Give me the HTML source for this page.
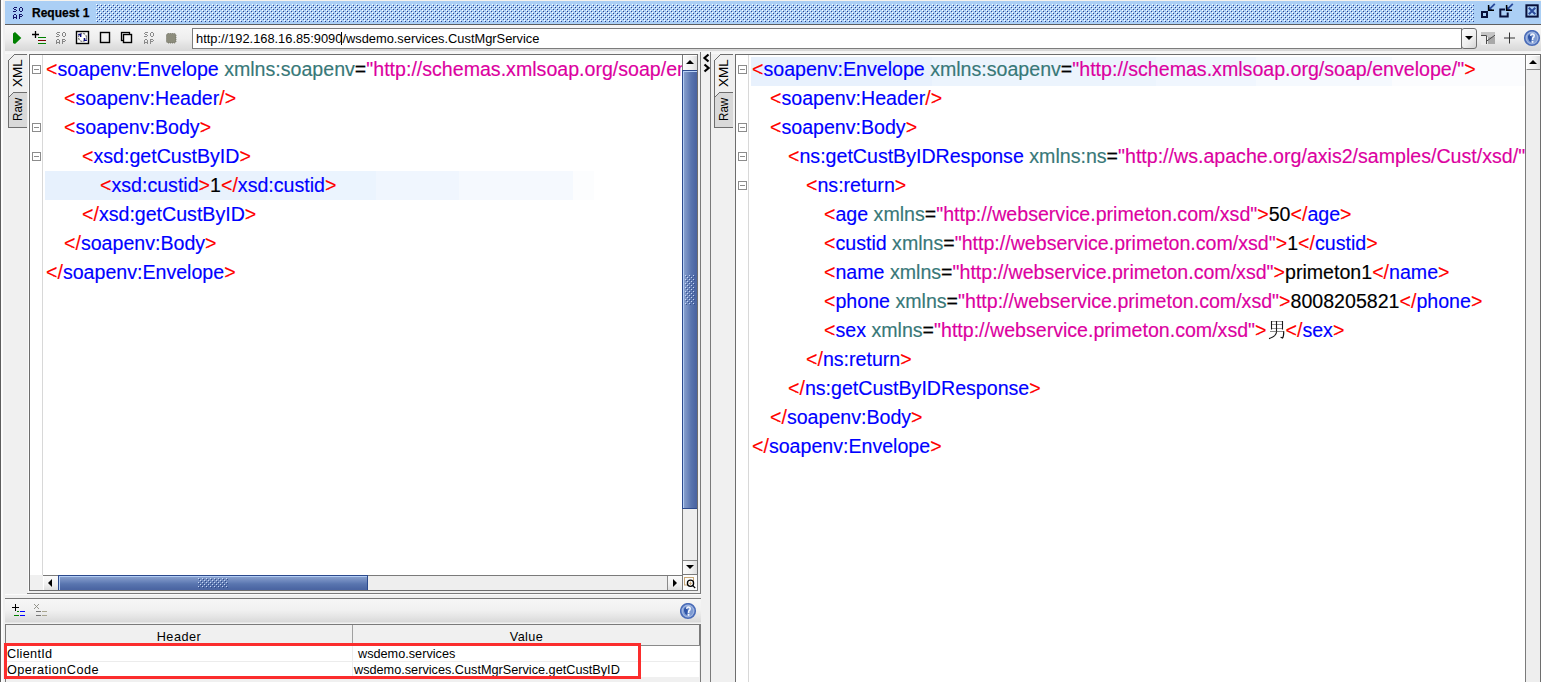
<!DOCTYPE html>
<html><head><meta charset="utf-8">
<style>
*{margin:0;padding:0;box-sizing:border-box}
html,body{width:1541px;height:682px;overflow:hidden}
body{position:relative;background:#f0f0f0;font-family:"Liberation Sans",sans-serif}
.a{position:absolute}
.code{position:absolute;font-size:19.6px;line-height:29px;white-space:pre;color:#000;-webkit-text-stroke:0.15px currentColor}
.r{color:#ff0000}.b{color:#0000ff}.t{color:#387878}.m{color:#dc00a0}.k{color:#000}
.fold{position:absolute;width:9px;height:9px;border:1px solid #8c8c8c;background:#fff}
.fold:after{content:"";position:absolute;left:1px;top:3px;width:5px;height:1px;background:#8c8c8c}
.tabtxt{position:absolute;font-size:13.5px;line-height:14px;color:#000;transform:rotate(-90deg);transform-origin:0 0;white-space:pre}
</style></head><body>

<!-- left edge -->
<div class="a" style="left:0;top:0;width:1px;height:682px;background:#5e5e5e"></div>
<div class="a" style="left:1px;top:0;width:2px;height:682px;background:#fcfcfc"></div>
<div class="a" style="left:4px;top:0;width:1537px;height:1px;background:#f6f3ee"></div>

<!-- title bar -->
<div class="a" style="left:5px;top:1px;width:1536px;height:23px;background:#abcff5"></div>
<div class="a" style="left:5px;top:24px;width:1536px;height:1px;background:#5f5f5f"></div>


<!-- title content -->
<svg class="a" style="left:13px;top:7px" width="10" height="12" fill="#14146a" shape-rendering="crispEdges"><rect x="1" y="0" width="1" height="1"/><rect x="2" y="0" width="1" height="1"/><rect x="3" y="0" width="1" height="1"/><rect x="0" y="1" width="1" height="1"/><rect x="1" y="2" width="1" height="1"/><rect x="2" y="2" width="1" height="1"/><rect x="3" y="3" width="1" height="1"/><rect x="0" y="4" width="1" height="1"/><rect x="1" y="4" width="1" height="1"/><rect x="2" y="4" width="1" height="1"/><rect x="7" y="0" width="1" height="1"/><rect x="8" y="0" width="1" height="1"/><rect x="6" y="1" width="1" height="1"/><rect x="9" y="1" width="1" height="1"/><rect x="6" y="2" width="1" height="1"/><rect x="9" y="2" width="1" height="1"/><rect x="6" y="3" width="1" height="1"/><rect x="9" y="3" width="1" height="1"/><rect x="7" y="4" width="1" height="1"/><rect x="8" y="4" width="1" height="1"/><rect x="1" y="7" width="1" height="1"/><rect x="2" y="7" width="1" height="1"/><rect x="0" y="8" width="1" height="1"/><rect x="3" y="8" width="1" height="1"/><rect x="0" y="9" width="1" height="1"/><rect x="3" y="9" width="1" height="1"/><rect x="0" y="10" width="1" height="1"/><rect x="1" y="10" width="1" height="1"/><rect x="2" y="10" width="1" height="1"/><rect x="3" y="10" width="1" height="1"/><rect x="0" y="11" width="1" height="1"/><rect x="3" y="11" width="1" height="1"/><rect x="6" y="7" width="1" height="1"/><rect x="7" y="7" width="1" height="1"/><rect x="8" y="7" width="1" height="1"/><rect x="6" y="8" width="1" height="1"/><rect x="9" y="8" width="1" height="1"/><rect x="6" y="9" width="1" height="1"/><rect x="7" y="9" width="1" height="1"/><rect x="8" y="9" width="1" height="1"/><rect x="6" y="10" width="1" height="1"/><rect x="6" y="11" width="1" height="1"/></svg>
<div class="a" style="left:32px;top:5px;font-size:12px;font-weight:bold;line-height:17px;color:#000;-webkit-text-stroke:0.25px #000">Request 1</div>
<svg class="a" style="left:96px;top:4px" width="1378" height="18"><defs><pattern id="dots" width="4" height="4" patternUnits="userSpaceOnUse"><rect x="0" y="0" width="1" height="1" fill="#ffffff"/><rect x="1" y="1" width="1" height="1" fill="#2c3f8c"/><rect x="2" y="2" width="1" height="1" fill="#ffffff"/><rect x="3" y="3" width="1" height="1" fill="#2c3f8c"/></pattern></defs><rect width="1378" height="18" fill="url(#dots)" shape-rendering="crispEdges"/></svg>
<!-- title right icons -->
<svg class="a" style="left:1478px;top:1px" width="63" height="21">
 <rect x="4" y="11" width="5" height="5" fill="none" stroke="#08103a" stroke-width="2"/>
 <path d="M11 5.5 V9 H14.5 Z" fill="#2a4a9a"/>
 <path d="M10.6 4 V9.3 H16" stroke="#000" stroke-width="1.5" fill="none"/>
 <path d="M16.8 2.8 L12 7.6" stroke="#2a4a9a" stroke-width="1.8"/>
 <path d="M27 8.4 H22.3 V15.6 H29.7 V11.4" stroke="#08103a" stroke-width="2" fill="none"/>
 <path d="M29 5.5 V9 H32.5 Z" fill="#2a4a9a"/>
 <path d="M28.6 4 V9.3 H34" stroke="#000" stroke-width="1.5" fill="none"/>
 <path d="M34.8 2.8 L30 7.6" stroke="#2a4a9a" stroke-width="1.8"/>
 <rect x="48.4" y="4.3" width="11.3" height="11.3" fill="none" stroke="#08103a" stroke-width="2"/>
 <path d="M50.8 6.8 L57.3 13.3 M57.3 6.8 L50.8 13.3" stroke="#2a4a9a" stroke-width="2"/>
</svg>


<!-- toolbar -->
<div class="a" style="left:5px;top:25px;width:1536px;height:26px;background:linear-gradient(#f6f6f6 0px,#f2f2f2 8px,#eeeeee 14px,#e2e2e2 20px,#d8d8d8 26px)"></div>
<div class="a" style="left:5px;top:51px;width:1536px;height:3px;background:linear-gradient(#f3f3f3,#f9f9f9)"></div>
<svg class="a" style="left:8px;top:28px" width="175" height="20">
 <path d="M5 5.5 L7 4 L13.3 10 L7 16 L5 15 Z" fill="#008000"/>
 <path d="M24 6.5 H31 M27.5 3 V10" stroke="#000" stroke-width="1.3"/>
 <g shape-rendering="crispEdges"><rect x="30" y="9" width="8" height="1" fill="#008000"/><rect x="30" y="12" width="8" height="1" fill="#800000"/><rect x="30" y="15" width="8" height="1" fill="#008000"/></g>
 <g fill="#858585" shape-rendering="crispEdges" transform="translate(48,4)"><rect x="1" y="0" width="1" height="1"/><rect x="2" y="0" width="1" height="1"/><rect x="3" y="0" width="1" height="1"/><rect x="0" y="1" width="1" height="1"/><rect x="1" y="2" width="1" height="1"/><rect x="2" y="2" width="1" height="1"/><rect x="3" y="3" width="1" height="1"/><rect x="0" y="4" width="1" height="1"/><rect x="1" y="4" width="1" height="1"/><rect x="2" y="4" width="1" height="1"/><rect x="7" y="0" width="1" height="1"/><rect x="8" y="0" width="1" height="1"/><rect x="6" y="1" width="1" height="1"/><rect x="9" y="1" width="1" height="1"/><rect x="6" y="2" width="1" height="1"/><rect x="9" y="2" width="1" height="1"/><rect x="6" y="3" width="1" height="1"/><rect x="9" y="3" width="1" height="1"/><rect x="7" y="4" width="1" height="1"/><rect x="8" y="4" width="1" height="1"/><rect x="1" y="7" width="1" height="1"/><rect x="2" y="7" width="1" height="1"/><rect x="0" y="8" width="1" height="1"/><rect x="3" y="8" width="1" height="1"/><rect x="0" y="9" width="1" height="1"/><rect x="3" y="9" width="1" height="1"/><rect x="0" y="10" width="1" height="1"/><rect x="1" y="10" width="1" height="1"/><rect x="2" y="10" width="1" height="1"/><rect x="3" y="10" width="1" height="1"/><rect x="0" y="11" width="1" height="1"/><rect x="3" y="11" width="1" height="1"/><rect x="6" y="7" width="1" height="1"/><rect x="7" y="7" width="1" height="1"/><rect x="8" y="7" width="1" height="1"/><rect x="6" y="8" width="1" height="1"/><rect x="9" y="8" width="1" height="1"/><rect x="6" y="9" width="1" height="1"/><rect x="7" y="9" width="1" height="1"/><rect x="8" y="9" width="1" height="1"/><rect x="6" y="10" width="1" height="1"/><rect x="6" y="11" width="1" height="1"/></g>
 <rect x="68.5" y="3.5" width="12" height="12" fill="#fff" stroke="#000" stroke-width="1.4"/>
 <circle cx="74.5" cy="9.4" r="4" fill="none" stroke="#7a7a7a" stroke-width="1.2" stroke-dasharray="2.3 0.85"/>
 <path d="M70.2 6.5 H72.7 V8.9" stroke="#0a0a80" stroke-width="1.4" fill="none"/>
 <path d="M76.4 9.9 V12.4 H78.9" stroke="#0a0a80" stroke-width="1.4" fill="none"/>
 <rect x="92.5" y="4.5" width="9" height="10" fill="none" stroke="#000" stroke-width="1.4"/>
 <rect x="113.5" y="4.5" width="8" height="8" fill="none" stroke="#000" stroke-width="1.3"/>
 <rect x="115.5" y="6.5" width="8" height="8" fill="#f4f4f4" stroke="#000" stroke-width="1.4"/>
 <g fill="#8a8a8a" shape-rendering="crispEdges" transform="translate(136,4)"><rect x="1" y="0" width="1" height="1"/><rect x="2" y="0" width="1" height="1"/><rect x="3" y="0" width="1" height="1"/><rect x="0" y="1" width="1" height="1"/><rect x="1" y="2" width="1" height="1"/><rect x="2" y="2" width="1" height="1"/><rect x="3" y="3" width="1" height="1"/><rect x="0" y="4" width="1" height="1"/><rect x="1" y="4" width="1" height="1"/><rect x="2" y="4" width="1" height="1"/><rect x="7" y="0" width="1" height="1"/><rect x="8" y="0" width="1" height="1"/><rect x="6" y="1" width="1" height="1"/><rect x="9" y="1" width="1" height="1"/><rect x="6" y="2" width="1" height="1"/><rect x="9" y="2" width="1" height="1"/><rect x="6" y="3" width="1" height="1"/><rect x="9" y="3" width="1" height="1"/><rect x="7" y="4" width="1" height="1"/><rect x="8" y="4" width="1" height="1"/><rect x="1" y="7" width="1" height="1"/><rect x="2" y="7" width="1" height="1"/><rect x="0" y="8" width="1" height="1"/><rect x="3" y="8" width="1" height="1"/><rect x="0" y="9" width="1" height="1"/><rect x="3" y="9" width="1" height="1"/><rect x="0" y="10" width="1" height="1"/><rect x="1" y="10" width="1" height="1"/><rect x="2" y="10" width="1" height="1"/><rect x="3" y="10" width="1" height="1"/><rect x="0" y="11" width="1" height="1"/><rect x="3" y="11" width="1" height="1"/><rect x="6" y="7" width="1" height="1"/><rect x="7" y="7" width="1" height="1"/><rect x="8" y="7" width="1" height="1"/><rect x="6" y="8" width="1" height="1"/><rect x="9" y="8" width="1" height="1"/><rect x="6" y="9" width="1" height="1"/><rect x="7" y="9" width="1" height="1"/><rect x="8" y="9" width="1" height="1"/><rect x="6" y="10" width="1" height="1"/><rect x="6" y="11" width="1" height="1"/></g>
 <rect x="158.5" y="5.5" width="9.5" height="9.5" rx="1.8" fill="#8c8c7c" stroke="#6a6a5c" stroke-width="0.9" stroke-dasharray="1 1"/>
</svg>
<!-- url field -->
<div class="a" style="left:192px;top:28px;width:1270px;height:21px;background:#fff;border:1px solid #7c7c7c"></div>
<div class="a" style="left:196px;top:31px;font-size:12.85px;line-height:16px;color:#000;white-space:pre">http://192.168.16.85:9090/wsdemo.services.CustMgrService</div>
<div class="a" style="left:341px;top:32px;width:1px;height:13px;background:#000"></div>
<div class="a" style="left:1461px;top:28px;width:16px;height:21px;border:1px solid #6e6e6e;border-radius:3px;background:linear-gradient(135deg,#ffffff,#eeeeee 60%,#d4d4d4)"></div>
<svg class="a" style="left:1461px;top:28px" width="16" height="21"><path d="M4 8 H12 L8 12 Z" fill="#000"/></svg>
<svg class="a" style="left:1480px;top:30px" width="61" height="17">
 <rect x="1" y="2" width="14" height="3" fill="#c4c4c4"/>
 <rect x="1" y="5" width="6" height="10" fill="#ececec"/>
 <rect x="8" y="7" width="7" height="7" fill="#a8a8a8"/>
 <rect x="7" y="5" width="8" height="2" fill="#c4c4c4"/>
 <path d="M1 5.5 H6.5 V14" stroke="#4a4a4a" stroke-width="1" fill="none"/>
 <path d="M6.8 11 L15 5.2" stroke="#4a4a4a" stroke-width="1" fill="none"/>
 <path d="M24 8 H35 M29.5 2.5 V13.5" stroke="#333" stroke-width="1"/>
<g transform="translate(44,0)"> <circle cx="8" cy="8" r="7.3" fill="#9fb5e0" stroke="#4a6cb8" stroke-width="1.6"/>
 <circle cx="8" cy="8" r="5.2" fill="#7f9bd2"/>
 <path d="M4 6 Q5 3.5 7 4.5 L8 8 L7 12 Q4.5 11 4 8 Z" fill="#2f55a8"/>
 <path d="M6.6 5.8 Q6.8 4 8.4 4 Q10.2 4 10.2 5.8 Q10.2 7.2 8.6 8.2 V10" stroke="#f4f8ff" stroke-width="1.5" fill="none"/>
 <rect x="7.8" y="11" width="1.6" height="1.8" fill="#f4f8ff"/></g>
</svg>


<!-- LEFT PANE -->
<svg class="a" style="left:7px;top:53px" width="21" height="77" shape-rendering="crispEdges">
 <path d="M2 44 L6 40 H20 V74 H2 Z" fill="#d9d9d9"/>
 <g fill="#6e6e6e"><rect x="1" y="7" width="1" height="68"/><rect x="2" y="6" width="1" height="1"/><rect x="3" y="5" width="1" height="1"/><rect x="4" y="4" width="1" height="1"/><rect x="5" y="3" width="1" height="1"/><rect x="6" y="2" width="1" height="1"/><rect x="7" y="1" width="13" height="1"/>
 <rect x="2" y="43" width="1" height="1"/><rect x="3" y="42" width="1" height="1"/><rect x="4" y="41" width="1" height="1"/><rect x="5" y="40" width="1" height="1"/><rect x="6" y="39" width="14" height="1"/><rect x="1" y="74" width="19" height="1"/></g>
</svg>
<div class="tabtxt" style="left:11px;top:87px">XML</div>
<div class="tabtxt" style="left:11px;top:121px;transform:rotate(-90deg) scaleX(0.86)">Raw</div>

<div class="a" style="left:29px;top:54px;width:669px;height:537px;background:#fff;border:1px solid #6e6e6e"></div>
<div class="a" style="left:42px;top:55px;width:1px;height:520px;background:#d8d8d8"></div>
<div class="a" style="left:700px;top:52px;width:1px;height:542px;background:#7a7a7a"></div>
<div class="a" style="left:27px;top:593px;width:674px;height:1px;background:#7a7a7a"></div>
<div class="a" style="left:28px;top:54px;width:1px;height:539px;background:#fbfbfb"></div>
<div class="a" style="left:5px;top:594px;width:696px;height:1px;background:#fbfbfb"></div>
<div class="a" style="left:45px;top:171px;width:549px;height:29px;background:linear-gradient(90deg,#e7f1fd 0,#e7f1fd 147px,#e9f2fd 147px,#e9f2fd 221px,#ebf4fe 221px,#ebf4fe 331px,#f0f6fe 331px,#f0f6fe 414px,#f5f9fe 414px,#f5f9fe 528px,#fcfdfe 528px)"></div>
<div class="fold" style="left:32px;top:65px"></div>
<div class="fold" style="left:32px;top:123px"></div>
<div class="fold" style="left:32px;top:152px"></div>
<div class="a" style="left:43px;top:55px;width:639px;height:520px;overflow:hidden">
<div class="code" style="left:3px;top:0px"><span class="r">&lt;</span><span class="b">soapenv:Envelope</span> <span class="t">xmlns:soapenv</span><span class="k">=</span><span class="m">"http://schemas.xmlsoap.org/soap/envelope/"</span> <span class="t">xmlns:xsd</span><span class="k">=</span><span class="m">"http://ws.apache.org/axis2/samples/Cust/xsd"</span><span class="r">&gt;</span></div>
<div class="code" style="left:21px;top:29px"><span class="r">&lt;</span><span class="b">soapenv:Header</span><span class="r">/&gt;</span></div>
<div class="code" style="left:21px;top:58px"><span class="r">&lt;</span><span class="b">soapenv:Body</span><span class="r">&gt;</span></div>
<div class="code" style="left:39px;top:87px"><span class="r">&lt;</span><span class="b">xsd:getCustByID</span><span class="r">&gt;</span></div>
<div class="code" style="left:57px;top:116px"><span class="r">&lt;</span><span class="b">xsd:custid</span><span class="r">&gt;</span><span class="k">1</span><span class="r">&lt;/</span><span class="b">xsd:custid</span><span class="r">&gt;</span></div>
<div class="code" style="left:39px;top:145px"><span class="r">&lt;/</span><span class="b">xsd:getCustByID</span><span class="r">&gt;</span></div>
<div class="code" style="left:21px;top:174px"><span class="r">&lt;/</span><span class="b">soapenv:Body</span><span class="r">&gt;</span></div>
<div class="code" style="left:3px;top:203px"><span class="r">&lt;/</span><span class="b">soapenv:Envelope</span><span class="r">&gt;</span></div>
</div>
<!-- v scrollbar -->
<div class="a" style="left:682px;top:55px;width:15px;height:520px;background:#eeeeee;border-left:1px solid #7a7a7a"></div>
<div class="a" style="left:683px;top:55px;width:14px;height:15px;background:linear-gradient(90deg,#fbfbfb,#f0f0f0 60%,#dedede);border-top:1px solid #fff;border-left:1px solid #fff"></div>
<svg class="a" style="left:683px;top:55px" width="14" height="15"><path d="M3 9 H11 L7 5 Z" fill="#000"/></svg>
<div class="a" style="left:682px;top:70px;width:15px;height:439px;border-top:1px solid #2c4a8c;border-left:1px solid #2c4a8c;border-bottom:1px solid #2c4a8c;background:linear-gradient(90deg,#b2cdf6 0,#b2cdf6 1px,#869ecb 1px,#6d87bd 5px,#5975af 8px,#4b65a2 13px)"></div>
<div class="a" style="left:684px;top:71px;width:13px;height:1px;background:#b9d2f7"></div>
<svg class="a" style="left:685px;top:275px" width="10" height="30"><defs><pattern id="gv" width="4" height="4" patternUnits="userSpaceOnUse"><rect x="0" y="0" width="1" height="1" fill="#c6d6f4"/><rect x="1" y="1" width="1" height="1" fill="#3a5490"/><rect x="2" y="2" width="1" height="1" fill="#c6d6f4"/><rect x="3" y="3" width="1" height="1" fill="#3a5490"/></pattern></defs><rect width="10" height="30" fill="url(#gv)" shape-rendering="crispEdges"/></svg>
<div class="a" style="left:683px;top:560px;width:14px;height:15px;background:linear-gradient(90deg,#fbfbfb,#f0f0f0 60%,#dedede);border-top:1px solid #8a8a8a"></div>
<svg class="a" style="left:683px;top:560px" width="14" height="15"><path d="M3 5 H11 L7 9 Z" fill="#000"/></svg>
<!-- h scrollbar -->
<div class="a" style="left:30px;top:575px;width:13px;height:15px;background:#f0f0f0"></div>
<div class="a" style="left:43px;top:575px;width:639px;height:15px;background:#eeeeee;border-top:1px solid #7a7a7a"></div>
<div class="a" style="left:43px;top:576px;width:15px;height:14px;background:linear-gradient(180deg,#fbfbfb,#f0f0f0 60%,#dedede);border-left:1px solid #fff"></div>
<svg class="a" style="left:43px;top:576px" width="15" height="14"><path d="M9 3 V11 L5 7 Z" fill="#000"/></svg>
<div class="a" style="left:58px;top:575px;width:310px;height:15px;border-left:1px solid #2c4a8c;border-top:1px solid #2c4a8c;border-right:1px solid #2c4a8c;background:linear-gradient(180deg,#b2cdf6 0,#b2cdf6 1px,#869ecb 1px,#6d87bd 5px,#5975af 8px,#4b65a2 13px)"></div>
<div class="a" style="left:59px;top:576px;width:1px;height:14px;background:#b9d2f7"></div>
<svg class="a" style="left:198px;top:578px" width="30" height="10"><defs><pattern id="gh" width="4" height="4" patternUnits="userSpaceOnUse"><rect x="0" y="0" width="1" height="1" fill="#c6d6f4"/><rect x="1" y="1" width="1" height="1" fill="#2f4a88"/><rect x="2" y="2" width="1" height="1" fill="#c6d6f4"/><rect x="3" y="3" width="1" height="1" fill="#2f4a88"/></pattern></defs><rect width="30" height="10" fill="url(#gh)" shape-rendering="crispEdges"/></svg>
<div class="a" style="left:667px;top:576px;width:15px;height:14px;background:linear-gradient(180deg,#fbfbfb,#f0f0f0 60%,#dedede);border-left:1px solid #8a8a8a"></div>
<svg class="a" style="left:667px;top:576px" width="15" height="14"><path d="M6 3 V11 L10 7 Z" fill="#000"/></svg>
<div class="a" style="left:682px;top:574px;width:16px;height:17px;background:#fcfcfc;border:1px solid #7a7a7a"></div>
<svg class="a" style="left:682px;top:574px" width="16" height="17"><rect x="2.5" y="3.5" width="9" height="7.5" fill="none" stroke="#c8a878" stroke-width="1"/><circle cx="8.5" cy="9.3" r="3.1" fill="#fff" stroke="#000" stroke-width="1.3"/><path d="M6.7 9.3 H10.3 M8.5 7.5 V11.1" stroke="#c8a878" stroke-width="0.9"/><path d="M10.8 11.6 L13.2 14" stroke="#000" stroke-width="1.2"/></svg>


<!-- SPLITTER -->
<div class="a" style="left:710px;top:52px;width:1px;height:630px;background:#7a7a7a"></div>
<svg class="a" style="left:701px;top:52px" width="9" height="22">
 <path d="M7.5 2.5 L3.5 6 L7.5 9.5" stroke="#000" stroke-width="2.2" fill="none"/>
 <path d="M3.5 12.5 L7.5 16 L3.5 19.5" stroke="#000" stroke-width="2.2" fill="none"/>
</svg>

<!-- RIGHT PANE -->
<svg class="a" style="left:713px;top:53px" width="21" height="77" shape-rendering="crispEdges">
 <path d="M2 44 L6 40 H20 V74 H2 Z" fill="#d9d9d9"/>
 <g fill="#6e6e6e"><rect x="1" y="7" width="1" height="68"/><rect x="2" y="6" width="1" height="1"/><rect x="3" y="5" width="1" height="1"/><rect x="4" y="4" width="1" height="1"/><rect x="5" y="3" width="1" height="1"/><rect x="6" y="2" width="1" height="1"/><rect x="7" y="1" width="13" height="1"/>
 <rect x="2" y="43" width="1" height="1"/><rect x="3" y="42" width="1" height="1"/><rect x="4" y="41" width="1" height="1"/><rect x="5" y="40" width="1" height="1"/><rect x="6" y="39" width="14" height="1"/><rect x="1" y="74" width="19" height="1"/></g>
</svg>
<div class="tabtxt" style="left:717px;top:87px">XML</div>
<div class="tabtxt" style="left:717px;top:121px;transform:rotate(-90deg) scaleX(0.86)">Raw</div>

<div class="a" style="left:735px;top:54px;width:806px;height:640px;background:#fff;border:1px solid #6e6e6e"></div>
<div class="a" style="left:748px;top:55px;width:1px;height:627px;background:#d8d8d8"></div>
<div class="a" style="left:751px;top:57px;width:774px;height:29px;background:linear-gradient(90deg,#e8f1fd 0,#e8f1fd 181px,#ecf4fd 181px,#ecf4fd 405px,#f0f6fe 405px,#f0f6fe 505px,#f5f9fe 505px,#f5f9fe 641px,#fbfcfe 641px)"></div>
<div class="fold" style="left:738px;top:65px"></div>
<div class="fold" style="left:738px;top:123px"></div>
<div class="fold" style="left:738px;top:152px"></div>
<div class="fold" style="left:738px;top:181px"></div>
<div class="a" style="left:749px;top:55px;width:776px;height:627px;overflow:hidden">
<div class="code" style="left:3px;top:0px"><span class="r">&lt;</span><span class="b">soapenv:Envelope</span> <span class="t">xmlns:soapenv</span><span class="k">=</span><span class="m">"http://schemas.xmlsoap.org/soap/envelope/"</span><span class="r">&gt;</span></div>
<div class="code" style="left:21px;top:29px"><span class="r">&lt;</span><span class="b">soapenv:Header</span><span class="r">/&gt;</span></div>
<div class="code" style="left:21px;top:58px"><span class="r">&lt;</span><span class="b">soapenv:Body</span><span class="r">&gt;</span></div>
<div class="code" style="left:39px;top:87px"><span class="r">&lt;</span><span class="b">ns:getCustByIDResponse</span> <span class="t">xmlns:ns</span><span class="k">=</span><span class="m">"http://ws.apache.org/axis2/samples/Cust/xsd/"</span><span class="r">&gt;</span></div>
<div class="code" style="left:57px;top:116px"><span class="r">&lt;</span><span class="b">ns:return</span><span class="r">&gt;</span></div>
<div class="code" style="left:75px;top:145px"><span class="r">&lt;</span><span class="b">age</span> <span class="t">xmlns</span><span class="k">=</span><span class="m">"http://webservice.primeton.com/xsd"</span><span class="r">&gt;</span><span class="k">50</span><span class="r">&lt;/</span><span class="b">age</span><span class="r">&gt;</span></div>
<div class="code" style="left:75px;top:174px"><span class="r">&lt;</span><span class="b">custid</span> <span class="t">xmlns</span><span class="k">=</span><span class="m">"http://webservice.primeton.com/xsd"</span><span class="r">&gt;</span><span class="k">1</span><span class="r">&lt;/</span><span class="b">custid</span><span class="r">&gt;</span></div>
<div class="code" style="left:75px;top:203px"><span class="r">&lt;</span><span class="b">name</span> <span class="t">xmlns</span><span class="k">=</span><span class="m">"http://webservice.primeton.com/xsd"</span><span class="r">&gt;</span><span class="k">primeton1</span><span class="r">&lt;/</span><span class="b">name</span><span class="r">&gt;</span></div>
<div class="code" style="left:75px;top:232px"><span class="r">&lt;</span><span class="b">phone</span> <span class="t">xmlns</span><span class="k">=</span><span class="m">"http://webservice.primeton.com/xsd"</span><span class="r">&gt;</span><span class="k">8008205821</span><span class="r">&lt;/</span><span class="b">phone</span><span class="r">&gt;</span></div>
<div class="code" style="left:75px;top:261px"><span class="r">&lt;</span><span class="b">sex</span> <span class="t">xmlns</span><span class="k">=</span><span class="m">"http://webservice.primeton.com/xsd"</span><span class="r">&gt;</span><span class="k"><span style="display:inline-block;width:19px"></span></span><span class="r">&lt;/</span><span class="b">sex</span><span class="r">&gt;</span></div>
<div class="code" style="left:57px;top:290px"><span class="r">&lt;/</span><span class="b">ns:return</span><span class="r">&gt;</span></div>
<div class="code" style="left:39px;top:319px"><span class="r">&lt;/</span><span class="b">ns:getCustByIDResponse</span><span class="r">&gt;</span></div>
<div class="code" style="left:21px;top:348px"><span class="r">&lt;/</span><span class="b">soapenv:Body</span><span class="r">&gt;</span></div>
<div class="code" style="left:3px;top:377px"><span class="r">&lt;/</span><span class="b">soapenv:Envelope</span><span class="r">&gt;</span></div>
</div>
<svg class="a" style="left:1263px;top:316px" width="30" height="26">
 <path d="M8 5.5 H20 M8 8.5 H20 M8 12.5 H20" stroke="#9a9a9a" stroke-width="1"/>
 <path d="M8.5 5 V13.5 M13.5 5 V15 M19.5 5 V13.5" stroke="#1a1a1a" stroke-width="1.1"/>
 <path d="M7 15.5 H21" stroke="#8a8a8a" stroke-width="1"/>
 <path d="M13.7 15.2 Q13.2 20.5 6 22.6" stroke="#1a1a1a" stroke-width="1.1" fill="none"/>
 <path d="M20.7 15.3 Q20.8 20.3 19.6 22 L17.6 21.3" stroke="#111" stroke-width="1.2" fill="none"/>
</svg>
<!-- right v scrollbar -->
<div class="a" style="left:1525px;top:55px;width:16px;height:627px;background:#eeeeee;border-left:1px solid #7a7a7a;border-right:1px solid #6e6e6e"></div>
<div class="a" style="left:1526px;top:55px;width:14px;height:15px;background:linear-gradient(90deg,#fbfbfb,#f0f0f0 60%,#dedede);border-top:1px solid #fff;border-left:1px solid #fff;border-bottom:1px solid #8a8a8a"></div>
<svg class="a" style="left:1526px;top:55px" width="14" height="15"><path d="M3 9 H11 L7 5 Z" fill="#000"/></svg>

<!-- BOTTOM HEADERS PANEL -->
<div class="a" style="left:5px;top:598px;width:696px;height:1px;background:#7a7a7a"></div>
<div class="a" style="left:5px;top:599px;width:696px;height:25px;background:linear-gradient(#f6f6f6 0px,#f1f1f1 11px,#e6e6e6 17px,#d9d9d9 23px,#f2f2f2 24px)"></div>
<svg class="a" style="left:5px;top:598px" width="50" height="24" shape-rendering="crispEdges">
 <rect x="7" y="9" width="7" height="1" fill="#000"/><rect x="10" y="6" width="1" height="7" fill="#000"/>
 <rect x="12" y="13" width="2" height="1" fill="#008000"/><rect x="15" y="13" width="5" height="1" fill="#0000ff"/>
 <rect x="9" y="17" width="5" height="1" fill="#008000"/><rect x="15" y="17" width="5" height="1" fill="#0000ff"/>
 <path d="M29 6 L34 11 M34 6 L29 11" stroke="#8a8a80" stroke-width="0.9" shape-rendering="auto"/>
 <rect x="31" y="13" width="5" height="1" fill="#777"/><rect x="37" y="13" width="5" height="1" fill="#a8a590"/>
 <rect x="31" y="17" width="5" height="1" fill="#777"/><rect x="37" y="17" width="5" height="1" fill="#a8a590"/>
</svg>
<svg class="a" style="left:680px;top:603px" width="17" height="17">
 <circle cx="8" cy="8" r="7.3" fill="#9fb5e0" stroke="#4a6cb8" stroke-width="1.6"/>
 <circle cx="8" cy="8" r="5.2" fill="#7f9bd2"/>
 <path d="M4 6 Q5 3.5 7 4.5 L8 8 L7 12 Q4.5 11 4 8 Z" fill="#2f55a8"/>
 <path d="M6.6 5.8 Q6.8 4 8.4 4 Q10.2 4 10.2 5.8 Q10.2 7.2 8.6 8.2 V10" stroke="#f4f8ff" stroke-width="1.5" fill="none"/>
 <rect x="7.8" y="11" width="1.6" height="1.8" fill="#f4f8ff"/>
</svg>
<!-- table -->
<div class="a" style="left:5px;top:624px;width:696px;height:58px;background:#f0f0f0;border-left:1px solid #7a7a7a;border-top:1px solid #7a7a7a;border-right:1px solid #7a7a7a"></div>
<div class="a" style="left:6px;top:645px;width:694px;height:1px;background:#8a8a8a"></div>
<div class="a" style="left:352px;top:625px;width:1px;height:20px;background:#a0a0a0"></div>
<div class="a" style="left:6px;top:629px;width:346px;text-align:center;font-size:12.7px;line-height:16px;letter-spacing:0.5px">Header</div>
<div class="a" style="left:353px;top:629px;width:347px;text-align:center;font-size:12.7px;line-height:16px;letter-spacing:0.4px">Value</div>
<div class="a" style="left:6px;top:646px;width:693px;height:31px;background:#fff"></div>
<div class="a" style="left:6px;top:661px;width:694px;height:1px;background:#ececec"></div>
<div class="a" style="left:352px;top:646px;width:1px;height:32px;background:#ececec"></div>
<div class="a" style="left:7px;top:646px;font-size:12.7px;line-height:16px;letter-spacing:0.3px">ClientId</div>
<div class="a" style="left:358px;top:646px;font-size:12.7px;line-height:16px">wsdemo.services</div>
<div class="a" style="left:7px;top:662px;font-size:12.7px;line-height:16px;letter-spacing:0.45px">OperationCode</div>
<div class="a" style="left:354px;top:662px;font-size:12.7px;line-height:16px">wsdemo.services.CustMgrService.getCustByID</div>
<div class="a" style="left:699px;top:625px;width:1px;height:20px;background:#7a7a7a"></div>
<div class="a" style="left:4px;top:643px;width:637px;height:36px;border:3px solid #fb2d2d"></div>

</body></html>
